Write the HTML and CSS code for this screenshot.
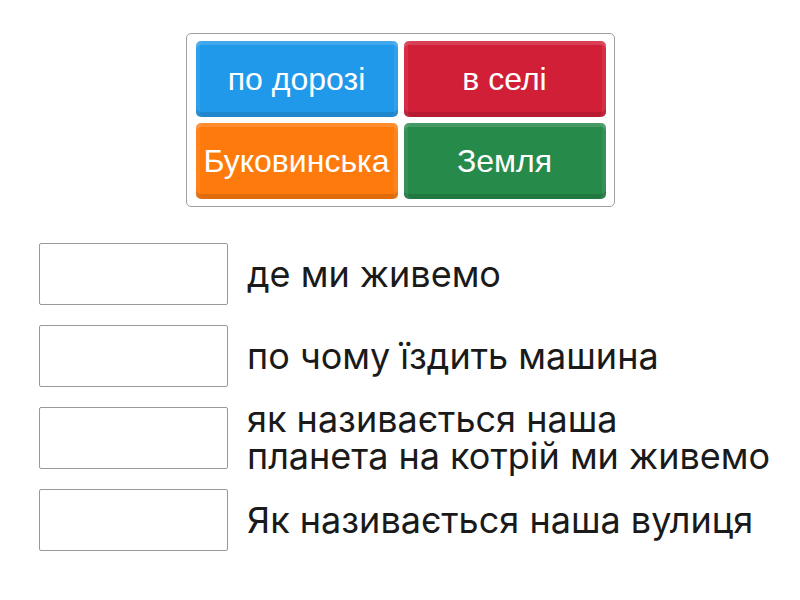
FILE: index.html
```html
<!DOCTYPE html>
<html lang="uk">
<head>
<meta charset="utf-8">
<link rel="stylesheet" href="styles.css">
</head>
<body>
<div class="page">
  <div class="bank">
    <div class="tile blue">по дорозі</div>
    <div class="tile red">в селі</div>
    <div class="tile orange">Буковинська</div>
    <div class="tile green">Земля</div>
  </div>
  <div class="rows">
    <div class="row"><div class="slot"></div><div class="label">де ми живемо</div></div>
    <div class="row"><div class="slot"></div><div class="label">по чому їздить машина</div></div>
    <div class="row"><div class="slot"></div><div class="label">як називається наша<br>планета на котрій ми живемо</div></div>
    <div class="row"><div class="slot"></div><div class="label">Як називається наша вулиця</div></div>
  </div>
</div>
</body>
</html>
```
FILE: styles.css
```css
html, body {
  margin: 0;
  padding: 0;
  background: #fff;
}
.page {
  width: 800px;
  height: 600px;
  display: flex;
  flex-direction: column;
  align-items: center;
  padding-top: 33px;
  box-sizing: border-box;
}
.bank {
  display: grid;
  grid-template-columns: 202px 202px;
  grid-auto-rows: 76px;
  gap: 6px;
  padding: 7px 8px 7px 9px;
  border: 1px solid #a0a0a0;
  border-radius: 5px;
}
.tile {
  display: flex;
  align-items: center;
  justify-content: center;
  border-radius: 5px;
  color: #fff;
  font-family: "Liberation Sans", Arial, sans-serif;
  font-size: 32px;
  white-space: nowrap;
  box-shadow:
    inset 0 -5px 0 rgba(0,0,0,0.12),
    inset 0 4px 0 rgba(255,255,255,0.14),
    inset 4px 0 0 rgba(255,255,255,0.07),
    inset -4px 0 0 rgba(255,255,255,0.07);
}
.blue { background: #2199ea; }
.red { background: #d21f38; }
.orange { background: #ff7a0c; }
.green { background: #268a4b; }
.rows {
  align-self: stretch;
  display: flex;
  flex-direction: column;
  gap: 20px;
  margin-top: 36px;
  padding-left: 39px;
}
.row {
  display: flex;
  align-items: center;
  gap: 19px;
  height: 62px;
}
.slot {
  width: 189px;
  height: 62px;
  box-sizing: border-box;
  border: 1px solid #999;
  border-radius: 2px;
  flex: none;
}
.label {
  font-family: Inter, "Noto Sans", sans-serif;
  font-size: 36px;
  line-height: 37px;
  color: #1a1a1a;
}
```
